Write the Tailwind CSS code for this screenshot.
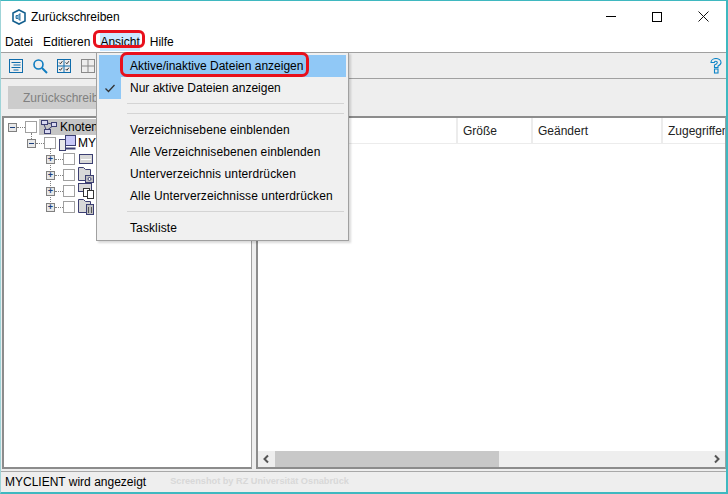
<!DOCTYPE html>
<html lang="de">
<head>
    <meta charset="UTF-8">
    <title>Zurückschreiben</title>
    <script src="https://cdn.jsdelivr.net/npm/@tailwindcss/browser@4"></script>
</head>
<body class="bg-white">
<div class="relative w-[728px] h-[494px] overflow-hidden bg-[#eeeeee] font-['Liberation_Sans',sans-serif] text-[12px] text-black">
    <div class="flex flex-col h-full border-t border-[#3fb8c0] border-r-2 border-b-2 border-l border-r-[#3fb8c0] border-b-[#3fb8c0] border-l-[#9fd4d8]">

        <!-- Title bar -->
        <div class="flex items-center h-[31px] shrink-0 bg-white pl-[10px]">
            <svg class="w-[16px] h-[16px]" viewBox="0 0 16 16" fill="none">
                <path d="M8 1l6 3v8l-6 3-6-3V4z" stroke="#14608f" stroke-width="1.600"/>
                <path d="M5 6.500h2l2-2v7l-2-2H5z" fill="#7fb4d8" stroke="#14608f" stroke-width="0.800"/>
            </svg>
            <span class="ml-[4px] text-[12px]">Zurückschreiben</span>
            <div class="ml-auto flex items-center">
                <div class="w-[46px] flex justify-center"><div class="w-[10px] h-px bg-black"></div></div>
                <div class="w-[46px] flex justify-center"><div class="w-[10px] h-[10px] border border-black"></div></div>
                <div class="w-[46px] flex justify-center">
                    <svg class="w-[11px] h-[11px]" viewBox="0 0 11 11" stroke="#111" stroke-width="1"><path d="M.5.500l10 10M10.500.500l-10 10"/></svg>
                </div>
            </div>
        </div>

        <!-- Menu bar -->
        <div class="flex items-center h-[21px] shrink-0 bg-white border-b border-[#a0a0a0] pl-[4px] gap-[10px]">
            <span>Datei</span>
            <span>Editieren</span>
            <span class="bg-[#cce8ff]">Ansicht</span>
            <span>Hilfe</span>
        </div>

        <!-- Toolbar -->
        <div class="flex items-center h-[26px] shrink-0 border-b border-[#a0a0a0] pl-[7px] pr-[4px] gap-[8px]">
            <svg class="w-[16px] h-[16px]" viewBox="0 0 16 16" fill="none" stroke="#0f6cab">
                <rect x="1.500" y="1.500" width="13" height="13"/>
                <path d="M3.500 4.500h9M5.500 7h7M3.500 9.500h9M5.500 12h5"/>
            </svg>
            <svg class="w-[16px] h-[16px]" viewBox="0 0 16 16" fill="none" stroke="#0f7cc0" stroke-width="1.600">
                <circle cx="6.500" cy="6.500" r="4.500"/>
                <path d="M10 10l5 5" stroke-width="2"/>
            </svg>
            <svg class="w-[16px] h-[16px]" viewBox="0 0 16 16" fill="none" stroke="#0f6cab">
                <rect x="1.500" y="1.500" width="13" height="13"/>
                <path d="M8 1.500v13M1.500 8h13"/>
                <path d="M3.200 4.500l1.200 1.300 2-2.600M9.700 4.500l1.200 1.300 2-2.600M3.200 11l1.200 1.300 2-2.600M9.700 11l1.200 1.300 2-2.600" stroke="#333"/>
            </svg>
            <svg class="w-[16px] h-[16px]" viewBox="0 0 16 16" fill="none" stroke="#8a8a8a">
                <rect x="1.500" y="1.500" width="13" height="13"/>
                <path d="M8 1.500v13M1.500 8h13"/>
            </svg>
            <svg class="w-[12px] h-[16px] ml-auto" viewBox="0 0 12 16" fill="none" stroke="#0f86c8" stroke-width="1.100">
                <path d="M1 4.500a5 4 0 0 1 10 0c0 2-1.500 2.800-3 3.500v1.500H4.500V7c1.500-.5 2.800-1 2.800-2.500a1.500 1.200 0 0 0-3 0z"/>
                <rect x="4.500" y="11" width="3.500" height="4"/>
            </svg>
        </div>

        <!-- Action row -->
        <div class="flex items-center h-[37px] shrink-0 pl-[7px]">
            <div class="flex items-center w-[120px] h-[23px] bg-[#cccccc] pl-[15px] text-[#808080] overflow-hidden whitespace-nowrap">Zurückschreiben</div>
        </div>

        <!-- Panes -->
        <div class="flex flex-1 min-h-0">
            <!-- Tree -->
            <div class="relative w-[250px] shrink-0 ml-px bg-white border-2 border-[#8c8c8c] border-r border-r-[#a0a0a0] pl-[4px] pt-[1px]">
                <div class="absolute left-[27px] top-[15px] h-[6px] border-l border-dotted border-[#808080]"></div>
                <div class="absolute left-[46px] top-[30px] h-[60px] border-l border-dotted border-[#808080]"></div>
                <div class="flex items-center h-[16px]">
                    <div class="w-[9px] h-[9px] border border-[#808080] bg-[#e8e8e8] flex items-center justify-center"><div class="w-[5px] h-px bg-[#1c3f7c]"></div></div>
                    <div class="w-[8px] border-t border-dotted border-[#808080]"></div>
                    <div class="w-[12px] h-[12px] border border-[#a0a0a0]"></div>
                    <div class="ml-[2px] flex items-center h-[16px] flex-1 bg-[#c6c6c6]">
                        <svg class="w-[18px] h-[16px] ml-px" viewBox="0 0 18 16" fill="none" stroke="#3c3f72">
                            <rect x="1.500" y="1.500" width="6" height="4" fill="#d8d8f0"/>
                            <rect x="11.500" y="3.500" width="5" height="4" fill="#d8d8f0"/>
                            <rect x="4.500" y="10.500" width="6" height="4" fill="#d8d8f0"/>
                            <path d="M7.500 4l4 1M8 10.500l4-3M4 5.500l2 5"/>
                        </svg>
                        <span class="ml-[2px]">Knoten</span>
                    </div>
                </div>
                <div class="flex items-center h-[16px] ml-[19px]">
                    <div class="relative w-[9px] h-[9px] border border-[#808080] bg-[#e8e8e8] flex items-center justify-center"><div class="w-[5px] h-px bg-[#1c3f7c]"></div></div>
                    <div class="w-[8px] border-t border-dotted border-[#808080]"></div>
                    <div class="w-[12px] h-[12px] border border-[#a0a0a0]"></div>
                    <svg class="w-[17px] h-[16px] ml-[3px]" viewBox="0 0 17 16" fill="none" stroke="#3c3f72">
                        <rect x="0.500" y="4.500" width="6" height="11" fill="#e8e8e8"/>
                        <rect x="6.500" y="0.500" width="10" height="10" fill="#c8c8f8"/>
                        <path d="M6.500 13.500h10" stroke-width="2"/>
                    </svg>
                    <span class="ml-[2px]">MY</span>
                </div>
                <div class="flex items-center h-[16px] ml-[38px]">
                    <div class="relative w-[9px] h-[9px] border border-[#808080] bg-[#e8e8e8] flex items-center justify-center text-[#1c3f7c] text-[9px] font-bold leading-none">+</div>
                    <div class="w-[8px] border-t border-dotted border-[#808080]"></div>
                    <div class="w-[12px] h-[12px] border border-[#a0a0a0]"></div>
                    <svg class="w-[16px] h-[16px] ml-[3px]" viewBox="0 0 16 16" fill="#d8d8d8" stroke="#3c3f72">
                        <rect x="1.500" y="3.500" width="13" height="9"/>
                        <path d="M3 8.500h10" stroke="#fff"/>
                    </svg>
                </div>
                <div class="flex items-center h-[16px] ml-[38px]">
                    <div class="relative w-[9px] h-[9px] border border-[#808080] bg-[#e8e8e8] flex items-center justify-center text-[#1c3f7c] text-[9px] font-bold leading-none">+</div>
                    <div class="w-[8px] border-t border-dotted border-[#808080]"></div>
                    <div class="w-[12px] h-[12px] border border-[#a0a0a0]"></div>
                    <svg class="w-[16px] h-[16px] ml-[3px]" viewBox="0 0 16 16" fill="#d8d8d8" stroke="#3c3f72">
                        <path d="M0.500 13.500v-13h5l2 2h5v6h-4v5z"/>
                        <rect x="7.500" y="8.500" width="8" height="7" fill="#c0c0c0"/>
                        <circle cx="11.500" cy="12" r="1.500" fill="#fff"/>
                    </svg>
                </div>
                <div class="flex items-center h-[16px] ml-[38px]">
                    <div class="relative w-[9px] h-[9px] border border-[#808080] bg-[#e8e8e8] flex items-center justify-center text-[#1c3f7c] text-[9px] font-bold leading-none">+</div>
                    <div class="w-[8px] border-t border-dotted border-[#808080]"></div>
                    <div class="w-[12px] h-[12px] border border-[#a0a0a0]"></div>
                    <svg class="w-[16px] h-[16px] ml-[3px]" viewBox="0 0 16 16" fill="#d8d8d8" stroke="#3c3f72">
                        <rect x="0.500" y="0.500" width="13" height="8"/>
                        <rect x="5.500" y="5.500" width="6" height="8" fill="#fff" stroke="#333"/>
                        <rect x="9.500" y="7.500" width="6" height="8" fill="#fff" stroke="#333"/>
                    </svg>
                </div>
                <div class="flex items-center h-[16px] ml-[38px]">
                    <div class="relative w-[9px] h-[9px] border border-[#808080] bg-[#e8e8e8] flex items-center justify-center text-[#1c3f7c] text-[9px] font-bold leading-none">+</div>
                    <div class="w-[8px] border-t border-dotted border-[#808080]"></div>
                    <div class="w-[12px] h-[12px] border border-[#a0a0a0]"></div>
                    <svg class="w-[16px] h-[16px] ml-[3px]" viewBox="0 0 16 16" fill="#d8d8d8" stroke="#3c3f72">
                        <path d="M0.500 13.500v-13h5l2 2h5v3h-4v8z"/>
                        <rect x="8.500" y="5.500" width="7" height="10" fill="#c0c0c0"/>
                        <path d="M10.500 8v6M13.500 8v6" stroke="#555"/>
                    </svg>
                </div>
            </div>

            <!-- File list -->
            <div class="flex flex-col flex-1 min-w-0 ml-[4px] bg-white border-2 border-r border-[#8c8c8c] border-r-[#a0a0a0]">
                <div class="flex h-[26px] shrink-0 text-[#222] border-b border-[#ececec]">
                    <div class="w-[200px] border-r-2 border-[#ececec]"></div>
                    <div class="w-[75px] border-r-2 border-[#ececec] pl-[5px] flex items-center">Größe</div>
                    <div class="w-[130px] border-r-2 border-[#ececec] pl-[5px] flex items-center">Geändert</div>
                    <div class="flex-1 overflow-hidden pl-[5px] flex items-center whitespace-nowrap">Zugegriffen</div>
                </div>
                <div class="flex-1"></div>
                <div class="flex items-center h-[16px] shrink-0 bg-[#eeeeee]">
                    <svg class="w-[17px] h-[16px] shrink-0" viewBox="0 0 17 16" fill="none" stroke="#555" stroke-width="2"><path d="M10 4.500L6.500 8l3.500 3.500"/></svg>
                    <div class="w-[224px] h-[16px] bg-[#c8c8c8]"></div>
                    <svg class="w-[17px] h-[16px] shrink-0 ml-auto" viewBox="0 0 17 16" fill="none" stroke="#555" stroke-width="2"><path d="M7 4.500L10.500 8 7 11.500"/></svg>
                </div>
            </div>
        </div>

        <!-- Status bar -->
        <div class="flex items-center h-[21px] shrink-0 mt-[2px] border-t border-[#a8a8a8] pl-[4px]">
            <span>MYCLIENT wird angezeigt</span>
            <span class="ml-[24px] text-[9.200px] font-bold text-[#d8d8d8]">Screenshot by RZ Universität Osnabrück</span>
        </div>
    </div>

    <!-- Ansicht dropdown -->
    <div class="absolute left-[96px] top-[52px] w-[253px] h-[189px] bg-[#f0f0f0] border border-[#a0a0a0] p-[2px] tracking-[0.11px] shadow-[2px_2px_2px_rgba(0,0,0,0.15)]">
        <div class="flex items-center h-[22px] bg-[#90c8f6] tracking-normal"><span class="w-[31px] shrink-0"></span>Aktive/inaktive Dateien anzeigen</div>
        <div class="flex items-center h-[22px] tracking-normal">
            <span class="flex items-center justify-center w-[22px] h-[22px] mr-[9px] bg-[#90c8f6] shrink-0">
                <svg class="w-[12px] h-[12px]" viewBox="0 0 12 12" fill="none" stroke="#333" stroke-width="1.300"><path d="M1.500 6.500l3 3 6-6.500"/></svg>
            </span>Nur aktive Dateien anzeigen
        </div>
        <div class="ml-[28px] mr-[2px] mt-[4px] border-t border-[#d4d4d4]"></div>
        <div class="ml-[28px] mr-[2px] mt-[9px] mb-[5px] border-t border-[#d4d4d4]"></div>
        <div class="flex items-center h-[22px] pl-[31px]">Verzeichnisebene einblenden</div>
        <div class="flex items-center h-[22px] pl-[31px]">Alle Verzeichnisebenen einblenden</div>
        <div class="flex items-center h-[22px] pl-[31px]">Unterverzeichnis unterdrücken</div>
        <div class="flex items-center h-[22px] pl-[31px]">Alle Unterverzeichnisse unterdrücken</div>
        <div class="ml-[28px] mr-[2px] mt-[4px] mb-[5px] border-t border-[#d4d4d4]"></div>
        <div class="flex items-center h-[22px] pl-[31px]">Taskliste</div>
    </div>

    <!-- Red annotations -->
    <div class="absolute left-[93px] top-[30px] w-[52px] h-[18px] border-[3px] border-[#e8101c] rounded-[6px]"></div>
    <div class="absolute left-[120px] top-[52px] w-[189px] h-[25px] border-[3px] border-[#e8101c] rounded-[7px]"></div>
</div>
</body>
</html>
